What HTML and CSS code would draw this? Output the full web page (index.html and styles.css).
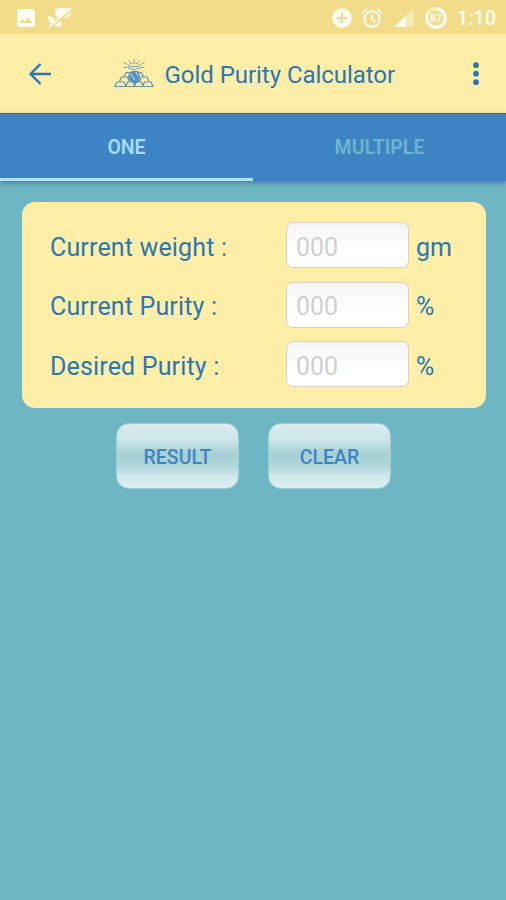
FILE: index.html
```
<!DOCTYPE html>
<html lang="en">
<head>
    <meta charset="UTF-8">
    <meta name="viewport" content="width=device-width, initial-scale=1.0">
    <title>Gold Purity Calculator</title>
    <link rel="stylesheet" href="styles.css">
</head>
<body>

    <div class="status-bar">
        <div class="status-left">
            <svg width="20" height="20" viewBox="0 0 20 20">
                <path fill="#fffdf0" fill-rule="evenodd" d="M3 1h14a2 2 0 0 1 2 2v14a2 2 0 0 1-2 2H3a2 2 0 0 1-2-2V3a2 2 0 0 1 2-2zM3.500 15h13l-4.300-5.500-3.200 4-2.200-2.600z"/>
            </svg>
            <svg class="icon-mute" width="26" height="22" viewBox="0 0 26 22">
                <path fill="#fffdf0" d="M8 6Q8 1 13 1h10q2 1 1 4-1 5-5 6h-5l-5-1zM1 9q5 0 6 4l-1 4q-5-1-5-8zM8 17l5-4 2 5-2 2-5-1z"/>
                <path stroke="#f2dc8a" stroke-width="4" d="M3 20L24 2"/>
                <path stroke="#fffdf0" stroke-width="1.800" d="M2 20L24 1"/>
            </svg>
        </div>
        <div class="status-right">
            <svg width="20" height="20" viewBox="0 0 20 20">
                <circle cx="10" cy="10" r="9.800" fill="#fffdf0"/>
                <path stroke="#f2dc8a" stroke-width="2" d="M10 5v10M5 10h10"/>
            </svg>
            <svg class="icon-alarm" width="22" height="20" viewBox="0 0 22 20">
                <g fill="none" stroke="#fffdf0" stroke-width="2">
                    <circle cx="11" cy="11" r="7.700"/>
                    <path d="M1.500 5L6 1.200M20.500 5L16 1.200M11 6.500V11l3.500 2.500"/>
                </g>
            </svg>
            <svg class="icon-signal" width="20" height="20" viewBox="0 0 20 20">
                <path fill="#fffdf0" fill-opacity=".4" d="M20 0v19H0z"/>
                <path fill="#fffdf0" d="M12 7.600V19H0z"/>
            </svg>
            <svg class="icon-battery" width="22" height="22" viewBox="0 0 22 22">
                <circle cx="11" cy="11" r="9.300" fill="none" stroke="#fffdf0" stroke-opacity=".5" stroke-width="3"/>
                <path fill="none" stroke="#fffdf0" stroke-width="3" d="M11 1.700A9.300 9.300 0 1 1 3.500 5.500"/>
                <text class="battery-level" x="11" y="14.500">87</text>
            </svg>
            <span class="clock">1:10</span>
        </div>
    </div>

    <div class="toolbar">
        <svg class="back" width="24" height="24" viewBox="0 0 24 24">
            <path fill="none" stroke="#2676ba" stroke-width="2.400" d="M12.500 2L2.500 12l10 10M2.500 12h20.500"/>
        </svg>
        <div class="brand">
            <!-- stack of gold bars -->
            <svg class="logo" width="40" height="30" viewBox="0 0 40 30">
                <g fill="none" stroke="#6d92a8" stroke-width="1.200">
                    <path d="M1 27.500l2-4.500h7l2 4.500zM12 27.500l1.500-4.500h5.500l1.500 4.500zM20.500 27.500l1.500-4.500h5.500l1.500 4.500zM28.500 27.500l2-4.500h6.500l2 4.500z"/>
                    <path d="M5.500 22.500l2-4.500h6l2 5M25.500 23l1.500-5h6l2 4.500M10 17.500l2-4h5M29.500 17.500l-2-4h-5"/>
                </g>
                <path fill="none" stroke="#8aa59f" stroke-width="1" d="M14 9q0-5 6-5t6 5q-6 3-12 0zM15.500 7.500h9M20 0v3M14.500 1.500l2 2.500M25.500 1.500l-2 2.500M9.500 3.500l4 2M30.500 3.500l-4 2M9.500 8.500h3.500M27 8.500h3.500"/>
                <path fill="#5292c6" d="M15 14l3-2h6l2 4-1 6-4 3-5-3-2-4z"/>
                <path fill="none" stroke="#c4d2b8" stroke-width="1.200" d="M16 14.500l5 6.500M22 13l2 4"/>
            </svg>
            <span class="title">Gold Purity Calculator</span>
        </div>
        <svg class="more" width="8" height="24" viewBox="0 0 8 24">
            <g fill="#2676ba">
                <circle cx="4" cy="3.200" r="2.900"/>
                <circle cx="4" cy="11.700" r="2.900"/>
                <circle cx="4" cy="20.200" r="2.900"/>
            </g>
        </svg>
    </div>

    <div class="tabs">
        <div class="tab active">ONE</div>
        <div class="tab">MULTIPLE</div>
    </div>

    <div class="card">
        <div class="form-row">
            <label for="weight">Current weight :</label>
            <input type="text" id="weight" placeholder="000">
            <span class="unit">gm</span>
        </div>
        <div class="form-row">
            <label for="currentPurity">Current Purity :</label>
            <input type="text" id="currentPurity" placeholder="000">
            <span class="unit">%</span>
        </div>
        <div class="form-row">
            <label for="desiredPurity">Desired Purity :</label>
            <input type="text" id="desiredPurity" placeholder="000">
            <span class="unit">%</span>
        </div>
    </div>

    <div class="buttons">
        <button type="button">RESULT</button>
        <button type="button">CLEAR</button>
    </div>

</body>
</html>
```
FILE: styles.css
```
* {
    box-sizing: border-box;
}
body {
    font-family: Roboto, sans-serif;
    margin: 0;
    min-height: 900px;
    background-color: #6fb6c5;
    color: #2878b5;
}
svg {
    display: block;
    flex: none;
}
.status-bar {
    display: flex;
    justify-content: space-between;
    align-items: center;
    height: 34px;
    padding: 1px 10px 0 16px;
    background-color: #f2dc8a;
}
.status-left,
.status-right {
    display: flex;
    align-items: center;
}
.icon-mute {
    margin-left: 11px;
}
.icon-alarm {
    margin-left: 9px;
}
.icon-signal {
    margin-left: 11px;
}
.icon-battery {
    margin-left: 11px;
}
.battery-level {
    font-size: 10px;
    font-weight: bold;
    fill: #fffdf0;
    text-anchor: middle;
}
.clock {
    margin-left: 10px;
    font-size: 20px;
    font-weight: 500;
    line-height: 24px;
    color: #fffdf0;
}
.toolbar {
    display: flex;
    align-items: center;
    height: 79px;
    padding: 0 26px 0 28px;
    background-color: #ffeea8;
}
.brand {
    display: flex;
    align-items: center;
    flex: 1;
    margin-left: 62px;
}
.title {
    margin-left: 10.500px;
    padding-top: 3px;
    font-size: 24px;
    line-height: 30px;
    letter-spacing: -0.04px;
    white-space: nowrap;
}
.tabs {
    display: flex;
    height: 68px;
    background-color: #3e84c5;
    border-top: 1px solid #1c6eb2;
    box-shadow: 0 2px 5px rgba(0, 0, 0, 0.3);
}
.tab {
    flex: 1;
    padding-top: 3px;
    border-bottom: 3px solid transparent;
    line-height: 62px;
    font-size: 19.500px;
    font-weight: 600;
    text-align: center;
    color: #6cb5ca;
}
.tab.active {
    color: #a4ddfa;
    border-bottom-color: #aee2fa;
}
.card {
    display: flex;
    flex-direction: column;
    gap: 13px;
    height: 206px;
    margin: 21px 20px 0 22px;
    padding: 20px 0 0 28px;
    background-color: #ffeea8;
    border-radius: 13px;
}
.form-row {
    display: flex;
    align-items: center;
    height: 46.500px;
    font-size: 25px;
}
.form-row label {
    width: 236px;
    padding-top: 4px;
    letter-spacing: 0.16px;
}
.form-row input {
    width: 123px;
    height: 46px;
    padding: 4px 9px 0;
    border: 1px solid #d9cfc5;
    border-radius: 7px;
    background: linear-gradient(#f4f4f4, #fff 60%);
    font-family: inherit;
    font-size: 25px;
}
.form-row input::placeholder {
    color: #cfcfcf;
}
.unit {
    margin-left: 7px;
    padding-top: 4px;
}
.buttons {
    display: flex;
    justify-content: center;
    gap: 29px;
    margin: 15px 0 0 1px;
}
.buttons button {
    width: 123px;
    height: 66px;
    padding: 2px 0 0;
    border: 1px solid #a3cdd5;
    border-radius: 13px;
    background: linear-gradient(#dceef1, #c8e3e7 28%, #a5d0d4 46%, #b0d7da 66%, #d0e8eb 82%, #dceff2);
    font-family: inherit;
    font-size: 19.500px;
    font-weight: 500;
    color: #3e84c5;
}
```
